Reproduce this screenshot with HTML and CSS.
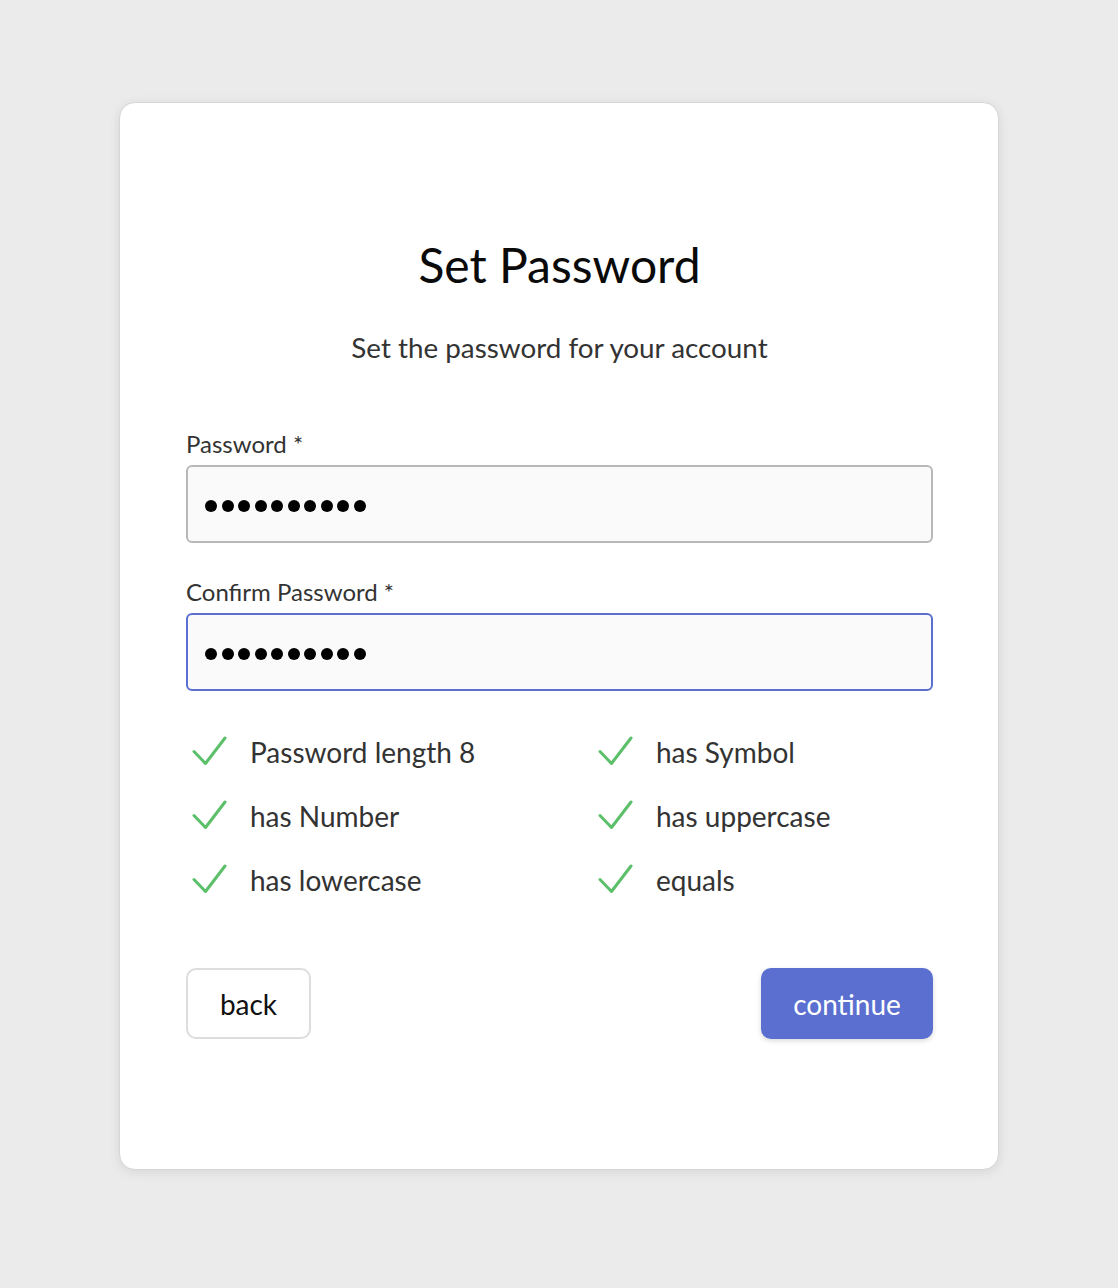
FILE: index.html
```html
<!DOCTYPE html>
<html lang="en">
<head>
<meta charset="utf-8">
<title>Set Password</title>
<link rel="stylesheet" href="styles.css">
</head>
<body>
<main class="card">
  <h1 class="title">Set Password</h1>
  <p class="subtitle">Set the password for your account</p>

  <label class="label">Password *</label>
  <div class="field">
    <span class="dot"></span><span class="dot"></span><span class="dot"></span><span class="dot"></span><span class="dot"></span><span class="dot"></span><span class="dot"></span><span class="dot"></span><span class="dot"></span><span class="dot"></span>
  </div>

  <label class="label label-second">Confirm Password *</label>
  <div class="field field-focus">
    <span class="dot"></span><span class="dot"></span><span class="dot"></span><span class="dot"></span><span class="dot"></span><span class="dot"></span><span class="dot"></span><span class="dot"></span><span class="dot"></span><span class="dot"></span>
  </div>

  <ul class="checks">
    <li class="check"><svg class="tick" viewBox="0 0 36 32"><path d="M2 15.5 L13.5 27.5 L33 2"/></svg><span>Password length 8</span></li>
    <li class="check"><svg class="tick" viewBox="0 0 36 32"><path d="M2 15.5 L13.5 27.5 L33 2"/></svg><span>has Symbol</span></li>
    <li class="check"><svg class="tick" viewBox="0 0 36 32"><path d="M2 15.5 L13.5 27.5 L33 2"/></svg><span>has Number</span></li>
    <li class="check"><svg class="tick" viewBox="0 0 36 32"><path d="M2 15.5 L13.5 27.5 L33 2"/></svg><span>has uppercase</span></li>
    <li class="check"><svg class="tick" viewBox="0 0 36 32"><path d="M2 15.5 L13.5 27.5 L33 2"/></svg><span>has lowercase</span></li>
    <li class="check"><svg class="tick" viewBox="0 0 36 32"><path d="M2 15.5 L13.5 27.5 L33 2"/></svg><span>equals</span></li>
  </ul>

  <div class="actions">
    <button class="btn btn-back">back</button>
    <button class="btn btn-continue">continue</button>
  </div>
</main>
</body>
</html>
```

FILE: styles.css
```css
html, body {
  margin: 0;
  padding: 0;
}
body {
  background: #ebebeb;
  font-family: Lato, "Open Sans", sans-serif;
  min-height: 1288px;
  padding-top: 102px;
  box-sizing: border-box;
}
.card {
  display: block;
  width: 880px;
  box-sizing: border-box;
  margin: 0 auto;
  background: #ffffff;
  border: 1px solid #d6d6d6;
  border-radius: 16px;
  box-shadow: 0 2px 12px rgba(0, 0, 0, 0.09);
  padding: 133px 65px 130px 66px;
}
.title {
  margin: 0;
  font-size: 48px;
  line-height: 58px;
  font-weight: 400;
  color: #0a0a0a;
  text-align: center;
}
.subtitle {
  margin: 37px 0 0;
  font-size: 27.8px;
  line-height: 34px;
  color: #333333;
  text-align: center;
}
.label {
  display: block;
  margin-top: 64px;
  font-size: 24px;
  line-height: 29px;
  color: #333333;
}
.label-second {
  margin-top: 34px;
}
.field {
  margin-top: 7px;
  height: 78px;
  box-sizing: border-box;
  border: 2px solid #b8b8b8;
  border-radius: 6px;
  background: #fafafa;
  display: flex;
  align-items: center;
  gap: 4.5px;
  padding: 4px 0 0 17px;
}
.field-focus {
  border-color: #5a6fcf;
}
.dot {
  width: 12px;
  height: 12px;
  border-radius: 50%;
  background: #000000;
}
.checks {
  list-style: none;
  margin: 29px 0 0;
  padding: 0;
  display: grid;
  grid-template-columns: 406px 1fr;
}
.check {
  height: 64px;
  display: flex;
  align-items: center;
  font-size: 28px;
  color: #333333;
  padding-left: 6px;
}
.tick {
  width: 36px;
  height: 32px;
  margin-right: 22px;
  flex: none;
}
.tick path {
  fill: none;
  stroke: #5cbf6a;
  stroke-width: 3;
  stroke-linecap: round;
  stroke-linejoin: round;
}
.actions {
  margin-top: 56px;
  display: flex;
  justify-content: space-between;
}
.btn {
  height: 71px;
  border-radius: 10px;
  font-family: Lato, "Open Sans", sans-serif;
  font-size: 28px;
  cursor: pointer;
  box-sizing: border-box;
}
.btn-back {
  width: 125px;
  background: #ffffff;
  border: 2px solid #dddddd;
  color: #111111;
}
.btn-continue {
  width: 172px;
  background: #5a6fcf;
  border: none;
  color: #ffffff;
  box-shadow: 0 2px 5px rgba(0, 0, 0, 0.15);
}
```
